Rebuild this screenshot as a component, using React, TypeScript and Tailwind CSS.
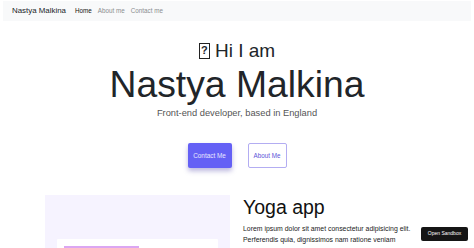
import React from "react";

export default function App() {
  return (
    <div className="relative h-[248px] w-[474px] overflow-hidden bg-white font-['Liberation_Sans',Arial,sans-serif] text-[#212529]">
      {/* Navbar */}
      <div className="px-[3px] pt-[1px]">
        <nav className="flex h-[20px] items-center bg-[#f8f9fa] pl-[9px]">
          <span className="text-[7.9px] leading-none text-[#212529]">Nastya Malkina</span>
          <div className="ml-[9px] flex items-center gap-[6px] text-[6.3px] leading-none">
            <span className="text-[#111]">Home</span>
            <span className="text-[#8a8d90]">About me</span>
            <span className="text-[#8a8d90]">Contact me</span>
          </div>
        </nav>
      </div>

      {/* Hero */}
      <div className="flex flex-col items-center">
        <div className="mt-[20px] flex h-[19px] items-center text-[19px] leading-[19px] text-[#212529]">
          <span className="mr-[5px] flex h-[16px] w-[11px] items-center justify-center border-[1.5px] border-[#222] text-[11px] font-bold leading-none">?</span>
          <span>Hi I am</span>
        </div>
        <h1 className="mt-[6px] text-[37.3px] leading-[37px] text-[#212529]">Nastya Malkina</h1>
        <p className="mt-[6px] text-[9.3px] leading-[9.3px] text-[#555]">Front-end developer, based in England</p>
        <div className="mt-[25px] flex items-center gap-[16px]">
          <button className="flex h-[25px] w-[44px] items-center justify-center rounded-[2px] bg-[#6460f5] text-[6.4px] text-[#e8e6ff] shadow-[0_3px_5px_rgba(60,50,160,0.35)]">
            Contact Me
          </button>
          <button className="flex h-[25px] w-[39px] items-center justify-center rounded-[2px] border border-[#b3adf2] bg-white text-[6.3px] text-[#5a55d8]">
            About Me
          </button>
        </div>
      </div>

      {/* Project */}
      <div className="mt-[27px] flex pl-[45px]">
        <div className="flex h-[60px] w-[185px] flex-col bg-[#f6f3ff]">
          <div className="mx-[12px] mt-[44px] flex-1 rounded-t-[1px] bg-white pl-[7px] pt-[7px]">
            <div className="h-[6px] w-[75px] bg-[#dba6f2]" />
          </div>
        </div>
        <div className="ml-[13px] flex flex-col">
          <h2 className="mt-[1px] text-[19.5px] leading-[22px] text-[#111]">Yoga app</h2>
          <p className="mt-[5px] text-[6.9px] leading-[11px] text-[#222]">
            Lorem ipsum dolor sit amet consectetur adipisicing elit.
            <br />
            Perferendis quia, dignissimos nam ratione veniam
          </p>
        </div>
      </div>

      {/* Open Sandbox */}
      <div className="absolute bottom-[7px] right-[6px] flex h-[14px] w-[47px] items-center justify-center rounded-[2px] bg-[#151515] text-[5px] text-white">
        Open Sandbox
      </div>
    </div>
  );
}
